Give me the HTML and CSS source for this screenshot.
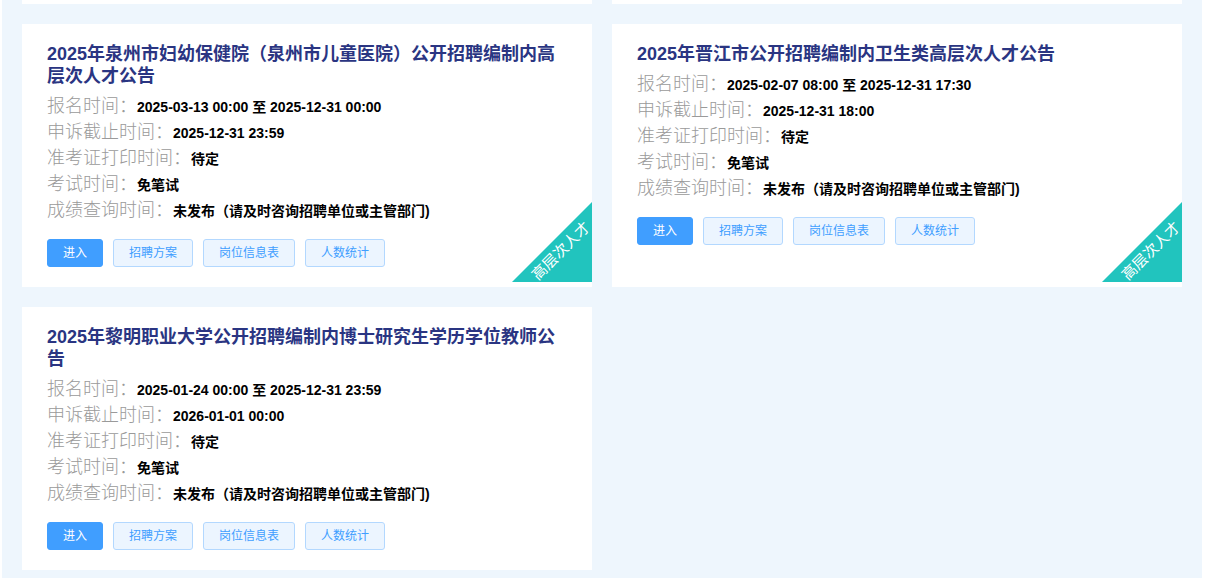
FILE: index.html
```html
<!DOCTYPE html>
<html lang="zh-CN">
<head>
<meta charset="utf-8">
<title>招聘公告</title>
<link rel="stylesheet" href="styles.css">
</head>
<body>
<div class="page">
  <div class="grid">
    <div class="card card-tail"></div>
    <div class="card card-tail"></div>

    <div class="card">
      <h3 class="title">2025年泉州市妇幼保健院（泉州市儿童医院）公开招聘编制内高层次人才公告</h3>
      <div class="row"><span class="label">报名时间：</span><span class="value">2025-03-13 00:00 至 2025-12-31 00:00</span></div>
      <div class="row"><span class="label">申诉截止时间：</span><span class="value">2025-12-31 23:59</span></div>
      <div class="row"><span class="label">准考证打印时间：</span><span class="value">待定</span></div>
      <div class="row"><span class="label">考试时间：</span><span class="value">免笔试</span></div>
      <div class="row"><span class="label">成绩查询时间：</span><span class="value">未发布（请及时咨询招聘单位或主管部门)</span></div>
      <div class="actions">
        <button class="btn btn-primary">进入</button>
        <button class="btn btn-plain">招聘方案</button>
        <button class="btn btn-plain">岗位信息表</button>
        <button class="btn btn-plain">人数统计</button>
      </div>
      <div class="badge"><span>高层次人才</span></div>
    </div>

    <div class="card">
      <h3 class="title">2025年晋江市公开招聘编制内卫生类高层次人才公告</h3>
      <div class="row"><span class="label">报名时间：</span><span class="value">2025-02-07 08:00 至 2025-12-31 17:30</span></div>
      <div class="row"><span class="label">申诉截止时间：</span><span class="value">2025-12-31 18:00</span></div>
      <div class="row"><span class="label">准考证打印时间：</span><span class="value">待定</span></div>
      <div class="row"><span class="label">考试时间：</span><span class="value">免笔试</span></div>
      <div class="row"><span class="label">成绩查询时间：</span><span class="value">未发布（请及时咨询招聘单位或主管部门)</span></div>
      <div class="actions">
        <button class="btn btn-primary">进入</button>
        <button class="btn btn-plain">招聘方案</button>
        <button class="btn btn-plain">岗位信息表</button>
        <button class="btn btn-plain">人数统计</button>
      </div>
      <div class="badge"><span>高层次人才</span></div>
    </div>

    <div class="card">
      <h3 class="title">2025年黎明职业大学公开招聘编制内博士研究生学历学位教师公告</h3>
      <div class="row"><span class="label">报名时间：</span><span class="value">2025-01-24 00:00 至 2025-12-31 23:59</span></div>
      <div class="row"><span class="label">申诉截止时间：</span><span class="value">2026-01-01 00:00</span></div>
      <div class="row"><span class="label">准考证打印时间：</span><span class="value">待定</span></div>
      <div class="row"><span class="label">考试时间：</span><span class="value">免笔试</span></div>
      <div class="row"><span class="label">成绩查询时间：</span><span class="value">未发布（请及时咨询招聘单位或主管部门)</span></div>
      <div class="actions">
        <button class="btn btn-primary">进入</button>
        <button class="btn btn-plain">招聘方案</button>
        <button class="btn btn-plain">岗位信息表</button>
        <button class="btn btn-plain">人数统计</button>
      </div>
    </div>
  </div>
</div>
</body>
</html>
```
FILE: styles.css
```css
html, body {
  margin: 0;
  padding: 0;
  background: #ffffff;
  height: 100%;
  overflow: hidden;
}
body {
  font-family: "Liberation Sans", "Noto Sans CJK SC", sans-serif;
  padding-left: 2px;
}
.page {
  width: 1160px;
  min-height: 578px;
  background: #eef6fd;
  padding: 0 20px 8px;
}
.grid {
  display: grid;
  grid-template-columns: 570px 570px;
  column-gap: 20px;
  row-gap: 20px;
}
.card {
  position: relative;
  background: #ffffff;
  padding: 19px 25px 20px;
  overflow: hidden;
}
.card.card-tail {
  height: 4px;
  padding: 0;
}
.title {
  margin: 0 0 6px;
  font-size: 18px;
  line-height: 22px;
  font-weight: bold;
  color: #2a3582;
}
.row {
  line-height: 26px;
  height: 26px;
  white-space: nowrap;
}
.label {
  font-size: 18px;
  font-weight: 300;
  color: #9a9a9a;
}
.value {
  font-size: 14px;
  font-weight: bold;
  color: #000000;
}
.actions {
  display: flex;
  gap: 10px;
  margin-top: 16px;
}
.btn {
  height: 28px;
  padding: 0 15px;
  border-radius: 3px;
  font-size: 12px;
  font-family: "Liberation Sans", "Noto Sans CJK SC", sans-serif;
  line-height: 26px;
  cursor: pointer;
}
.btn-primary {
  background: #409eff;
  border: 1px solid #409eff;
  color: #ffffff;
}
.btn-plain {
  background: #ecf5ff;
  border: 1px solid #b3d8ff;
  color: #409eff;
}
.badge {
  position: absolute;
  right: 0;
  bottom: 5px;
  width: 80px;
  height: 80px;
  background: #21c4be;
  clip-path: polygon(100% 0, 100% 100%, 0 100%);
}
.badge span {
  position: absolute;
  left: 49px;
  top: 49px;
  transform: translate(-50%, -50%) rotate(-45deg);
  white-space: nowrap;
  color: #ffffff;
  font-size: 15px;
  line-height: 16px;
}
```
